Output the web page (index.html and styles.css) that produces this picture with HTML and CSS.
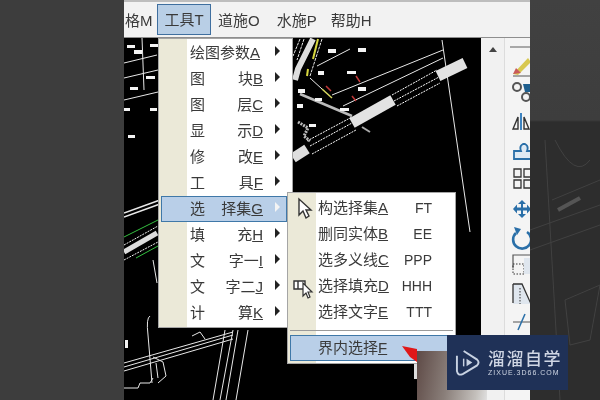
FILE: index.html
```html
<!DOCTYPE html>
<html>
<head>
  <meta charset="utf-8">
  <title>工具菜单</title>
  <link rel="stylesheet" href="styles.css">
</head>
<body>

<div class="shot">

  <div class="band-left"></div>

  <div class="app">
    <div class="top-strip"></div>

    <!-- menu bar -->
    <div class="menubar">
      <span class="bar-item cut">格M</span>
      <span class="bar-item active">工具T</span>
      <span class="bar-item road">道施O</span>
      <span class="bar-item water">水施P</span>
      <span class="bar-item help">帮助H</span>
    </div>

    <div class="work">
      <!-- drawing, viewBox uses page coordinates -->
      <svg class="canvas" viewBox="124 38 357 362">
        <g fill="none" stroke="#e8e8e8" stroke-width="1">
          <path d="M124 63L157 55M124 78L158 70M142 38L144 90M124 100L158 92"/>
          <path d="M124 213L160 200M124 217L160 204" stroke-width="1.5"/>
          <path d="M124 367L233 335M124 371L233 339M124 363L233 332"/>
          <path d="M153 260L157 283M150 316Q146 318 148 335L152 383M124 388L138 388L140 383L150 383L153 378"/>
          <path d="M153 357L163 362L166 376L158 383M156 363L158 378"/>
          <path d="M192 336L200 332L205 339M225 330L213 400M233 330L220 400M238 330L226 400M248 330L236 400"/>
          <path d="M442 40L470 232M317 66L350 49M332 95L443 50M343 106L443 58"/>
          <path d="M310 78L322 89" stroke="#eee"/>
          <path d="M322 89L332 98" stroke="#d8d860" stroke-width="1.5"/>
          <path d="M300 94L352 116" stroke="#bbb" stroke-width="2.500"/>
          <path d="M300 39L293 56M322 39L310 76M304 39L297 60" stroke-dasharray="3 1"/>
          <path d="M313 39L298 69L295 80" stroke="#ddd" stroke-width="6"/>
          <path d="M318 39L313 59M308 69L307 76" stroke="#d8d840" stroke-width="2"/>
          <path d="M293 158L307 149" stroke="#dedede" stroke-width="10"/>
          <path d="M352 123L393 100" stroke="#e2e2e2" stroke-width="11"/>
          <path d="M438 76L465 63" stroke="#e2e2e2" stroke-width="11"/>
          <path d="M307 141L352 117M310 146L352 123M312 154L356 130" stroke="#fff" stroke-dasharray="2 1"/>
          <path d="M392 95L437 70M394 101L439 77M397 106L440 83" stroke="#fff" stroke-dasharray="2 1"/>
          <path d="M362 127L370 132" stroke="#aaa" stroke-width="2"/>
          <path d="M298 122L308 128L304 136L310 141" stroke="#bbb" stroke-width="3" stroke-dasharray="2 1"/>
          <path d="M124 252L157 233" stroke="#ddd" stroke-width="5"/>
          <path d="M124 237L158 220M136 258L158 246" stroke="#35c040"/>
          <path d="M124 245L158 226M124 260L158 242" stroke="#eee" stroke-dasharray="2 1"/>
          <path d="M356 76L360 82M326 86L331 91M352 96L356 101" stroke="#c03838" stroke-width="1.5"/>
        </g>
        <g fill="#f4f4f4">
          <rect x="127" y="45" width="8" height="3"/><rect x="150" y="44" width="8" height="3"/>
          <rect x="134" y="50" width="8" height="4"/><rect x="146" y="76" width="9" height="3"/>
          <rect x="130" y="87" width="8" height="3"/><rect x="124" y="108" width="6" height="3"/>
          <rect x="150" y="108" width="7" height="3"/><rect x="128" y="135" width="7" height="3"/>
          <rect x="125" y="340" width="3" height="8"/>
          <rect x="328" y="49" width="8" height="4"/><rect x="358" y="48" width="8" height="4"/>
          <rect x="318" y="71" width="6" height="4"/><rect x="347" y="71" width="9" height="3"/>
          <rect x="358" y="87" width="8" height="4"/><rect x="315" y="98" width="7" height="3"/>
          <rect x="340" y="108" width="9" height="3"/><rect x="298" y="89" width="7" height="4"/>
          <rect x="297" y="104" width="6" height="4"/><rect x="309" y="124" width="7" height="3"/>
        </g>
      </svg>

      <div class="scrollbar"><span class="scroll-up"></span></div>

      <!-- toolbar, cut by the dark band on the right -->
      <div class="toolbar">
        <svg class="tools" viewBox="510 48 20 288">
          <path d="M513 74L528 58L531 62L518 75Z" fill="#d8c850"/>
          <path d="M513 74L516 68L521 73Z" fill="#c85a5a"/>
          <path d="M513 76H530" stroke="#555" fill="none"/>
          <circle cx="517" cy="87" r="4" fill="none" stroke="#555" stroke-width="2"/>
          <circle cx="526" cy="97" r="4" fill="none" stroke="#555" stroke-width="2"/>
          <path d="M523 84H531V92H525Z" fill="#1f5f8e"/>
          <path d="M521 113V130" stroke="#3d83c0" stroke-width="2"/>
          <path d="M518 117L513 129H518ZM524 117L529 129H524Z" fill="none" stroke="#333" stroke-width="1.4"/>
          <path d="M523 144Q519 146 521 151H514V159H531V151H527Q529 146 525 144Z" fill="#dfeaf4" stroke="#2a6fa8" stroke-width="1.8"/>
          <path d="M514 169h7v8h-7zM524 169h7v8h-7zM514 180h7v8h-7zM524 180h7v8h-7z" fill="none" stroke="#333" stroke-width="1.3"/>
          <path d="M522 200l4 4h-3v3.500h4v-3l4 4.500l-4 4.500v-3h-4v3.500h3l-4 4l-4 -4h3v-3.500h-4v3l-4 -4.500l4 -4.500v3h4v-3.500h-3z" fill="#2a6fa8"/>
          <path d="M527 232A9 9 0 1 1 516 233" fill="none" stroke="#2a6fa8" stroke-width="2.600"/>
          <path d="M514 227l7 2l-4 6z" fill="#2a6fa8"/>
          <path d="M513 268V255H531" fill="none" stroke="#555" stroke-width="1.200"/>
          <rect x="513" y="264" width="11" height="10" fill="none" stroke="#333" stroke-dasharray="1.500 1.500"/>
          <rect x="524" y="258" width="7" height="16" fill="#dfe6ee"/>
          <path d="M513 284H522L531 304H513Z" fill="#dfe6ee" stroke="none"/>
          <path d="M513 284V303M513 284H522L531 304" fill="none" stroke="#333" stroke-width="1.300"/>
          <path d="M520 288V304" stroke="#333" stroke-dasharray="1.500 1.500"/>
          <path d="M513 322H531" stroke="#555"/>
          <path d="M518 330L525 314" stroke="#2a6fa8" stroke-width="1.500"/>
        </svg>
      </div>
    </div>

    <!-- main dropdown -->
    <div class="menu main-menu">
      <div class="row"><span class="label"><span>绘图参数<u>A</u></span></span><i class="arrow"></i></div>
      <div class="row"><span class="label"><span>图</span><span>块<u>B</u></span></span><i class="arrow"></i></div>
      <div class="row"><span class="label"><span>图</span><span>层<u>C</u></span></span><i class="arrow"></i></div>
      <div class="row"><span class="label"><span>显</span><span>示<u>D</u></span></span><i class="arrow"></i></div>
      <div class="row"><span class="label"><span>修</span><span>改<u>E</u></span></span><i class="arrow"></i></div>
      <div class="row"><span class="label"><span>工</span><span>具<u>F</u></span></span><i class="arrow"></i></div>
      <div class="row selected"><span class="label"><span>选</span><span>择集<u>G</u></span></span><i class="arrow"></i></div>
      <div class="row"><span class="label"><span>填</span><span>充<u>H</u></span></span><i class="arrow"></i></div>
      <div class="row"><span class="label"><span>文</span><span>字一<u>I</u></span></span><i class="arrow"></i></div>
      <div class="row"><span class="label"><span>文</span><span>字二<u>J</u></span></span><i class="arrow"></i></div>
      <div class="row"><span class="label"><span>计</span><span>算<u>K</u></span></span><i class="arrow"></i></div>
    </div>

    <!-- sub menu -->
    <div class="menu sub-menu">
      <div class="row">
        <svg class="row-icon" viewBox="0 0 26 26"><path d="M10 4V20L14 16L17 23L20 21L17 15H22Z" fill="#fff" stroke="#333" stroke-width="1.400"/></svg>
        <span>构选择集<u>A</u></span><span class="key">FT</span>
      </div>
      <div class="row"><span>删同实体<u>B</u></span><span class="key">EE</span></div>
      <div class="row"><span>选多义线<u>C</u></span><span class="key">PPP</span></div>
      <div class="row">
        <svg class="row-icon" viewBox="0 0 26 26"><path d="M5 8H16V16H5ZM9 8V16" fill="#fff" stroke="#333" stroke-width="1.400"/><path d="M14 10V23L17 20L19 25L21 24L19 19H23Z" fill="#fff" stroke="#333" stroke-width="1.200"/></svg>
        <span>选择填充<u>D</u></span><span class="key">HHH</span>
      </div>
      <div class="row"><span>选择文字<u>E</u></span><span class="key">TTT</span></div>
      <div class="sep"></div>
      <div class="row selected"><span>界内选择<u>F</u></span></div>
    </div>

    <div class="patch"></div>
    <svg class="pointer" viewBox="0 0 16 18"><path d="M1 1L16 4V17L9 12Z" fill="#e01818"/></svg>
    <div class="stub"></div>
  </div>

  <div class="band-right">
    <svg class="band-lines" viewBox="530 122 70 278">
      <g fill="none" stroke="#414141">
        <path d="M530 230L600 205M530 250L600 225M545 140L560 400M552 200L600 180"/>
        <path d="M555 140Q575 180 590 160M565 300L600 285L590 340L570 345Z"/>
        <path d="M558 210L580 198" stroke="#555" stroke-width="4"/>
      </g>
    </svg>
  </div>

  <!-- watermark -->
  <div class="mark">
    <svg class="mark-logo" viewBox="0 0 26 28">
      <path d="M9 2L23 11Q26 14 23 17L8 26Q3 28 2 23V7" fill="none" stroke="#c8d2e2" stroke-width="2"/>
      <path d="M12 10L18 14L12 18Z" fill="#c8d2e2"/>
      <path d="M9 10V18" stroke="#c8d2e2" stroke-width="1.500"/>
    </svg>
    <div class="mark-text">
      <div class="mark-name">溜溜自学</div>
      <div class="mark-url">ZIXUE.3D66.COM</div>
    </div>
  </div>

</div>

</body>
</html>
```

FILE: styles.css
```css
html, body {
  margin: 0;
  padding: 0;
}
body {
  font-family: "Liberation Sans", "Noto Sans CJK SC", sans-serif;
  font-size: 15px;
  color: #3a3a3a;
}
.shot {
  position: relative;
  display: flex;
  width: 600px;
  height: 400px;
  overflow: hidden;
  filter: blur(0.4px);
}
.band-left {
  width: 124px;
  background-color: #3d3d3d;
}
.band-right {
  width: 70px;
  background: linear-gradient(#414141 0, #3d3d3d 120px, #2d2d2d 122px);
}
.band-lines {
  display: block;
  width: 70px;
  height: 278px;
  margin-top: 122px;
}
.app {
  position: relative;
  display: flex;
  flex-direction: column;
  width: 406px;
}
.top-strip {
  height: 2px;
  background-color: #bdbdbd;
}
.menubar {
  display: flex;
  align-items: center;
  height: 35px;
  background-color: #f2f2f2;
  border-bottom: 1px solid #8e8e8e;
}
.bar-item {
  white-space: nowrap;
}
.cut {
  width: 33px;
  overflow: hidden;
  text-indent: 1px;
}
.active {
  width: 52px;
  height: 29px;
  line-height: 29px;
  text-align: center;
  background-color: #b9cfe6;
  border: 1px solid #3f6f9f;
}
.road {
  margin-left: 7px;
}
.water {
  margin-left: 17px;
}
.help {
  margin-left: 14px;
}
.work {
  display: flex;
  flex: 1;
  min-height: 0;
}
.canvas {
  display: block;
  width: 357px;
  height: 362px;
  background-color: #000;
}
.scrollbar {
  width: 23px;
  background-color: #f1f1f1;
  border-right: 1px solid #dcdcdc;
}
.scroll-up {
  display: block;
  width: 0;
  height: 0;
  margin: 9px 0 0 8px;
  border-left: 4px solid transparent;
  border-right: 4px solid transparent;
  border-bottom: 5px solid #444;
}
.toolbar {
  width: 25px;
  background-color: #f4f4f4;
}
.tools {
  display: block;
  width: 20px;
  height: 288px;
  margin: 8px 0 0 5px;
  border-top: 2px solid #a8a8a8;
}

/* menus */
.menu {
  position: absolute;
  box-sizing: border-box;
  background-color: #fff;
  border: 1px solid #a5a5a5;
  white-space: nowrap;
}
.main-menu {
  left: 34px;
  top: 38px;
  width: 135px;
  height: 290px;
  padding-top: 1px;
  background: linear-gradient(to right, #ebe9d8 28px, #fff 28px);
}
.sub-menu {
  left: 163px;
  top: 192px;
  width: 169px;
  height: 172px;
  padding-top: 2px;
  background: linear-gradient(to right, #ebe9d8 28px, #fff 28px);
}
.row {
  position: relative;
  display: flex;
  align-items: center;
  box-sizing: border-box;
  height: 26px;
  padding-bottom: 4px;
}
.main-menu .row {
  padding-left: 31px;
}
.sub-menu .row {
  padding-left: 30px;
}
.label {
  display: flex;
  justify-content: space-between;
  width: 73px;
}
.arrow {
  width: 0;
  height: 0;
  margin-left: 12px;
  border-top: 5px solid transparent;
  border-bottom: 5px solid transparent;
  border-left: 5px solid #222;
}
.selected {
  background-color: #b9cfe8;
  border: 1px solid #3f78a8;
}
.main-menu .selected {
  margin: 0 5px 0 2px;
  padding-left: 28px;
}
.main-menu .selected .arrow {
  border-left-color: #f4f4f4;
}
.sub-menu .selected {
  margin: 0 2px;
  padding-left: 27px;
}
.row-icon {
  position: absolute;
  left: 1px;
  top: 0;
  width: 26px;
  height: 26px;
}
.key {
  position: absolute;
  right: 23px;
  margin-top: 4px;
  font-size: 14px;
}
.sep {
  height: 1px;
  margin: 5px 2px 4px 2px;
  background-color: #9a9a9a;
}

/* over the screenshot */
.patch {
  position: absolute;
  left: 293px;
  top: 351px;
  width: 70px;
  height: 49px;
  background: linear-gradient(100deg, #5e4a46, #8a7f7a 45%, #c4c0bc 85%, #e0e0e0);
}
.pointer {
  position: absolute;
  left: 277px;
  top: 345px;
  width: 16px;
  height: 18px;
}
.stub {
  position: absolute;
  left: 290px;
  top: 364px;
  width: 3px;
  height: 15px;
  background-color: #ddd;
}
.mark {
  position: absolute;
  left: 447px;
  top: 335px;
  display: flex;
  align-items: center;
  box-sizing: border-box;
  width: 121px;
  height: 55px;
  padding-left: 8px;
  background-color: #1f3157;
  color: #cfd6e4;
}
.mark-logo {
  flex: none;
  width: 25px;
  height: 27px;
  margin-right: 8px;
}
.mark-text {
  white-space: nowrap;
}
.mark-name {
  font-family: "Noto Sans CJK SC", sans-serif;
  font-size: 17px;
  line-height: 20px;
  font-weight: 500;
  letter-spacing: 1.500px;
}
.mark-url {
  font-size: 7px;
  line-height: 9px;
  letter-spacing: 1px;
}
```
